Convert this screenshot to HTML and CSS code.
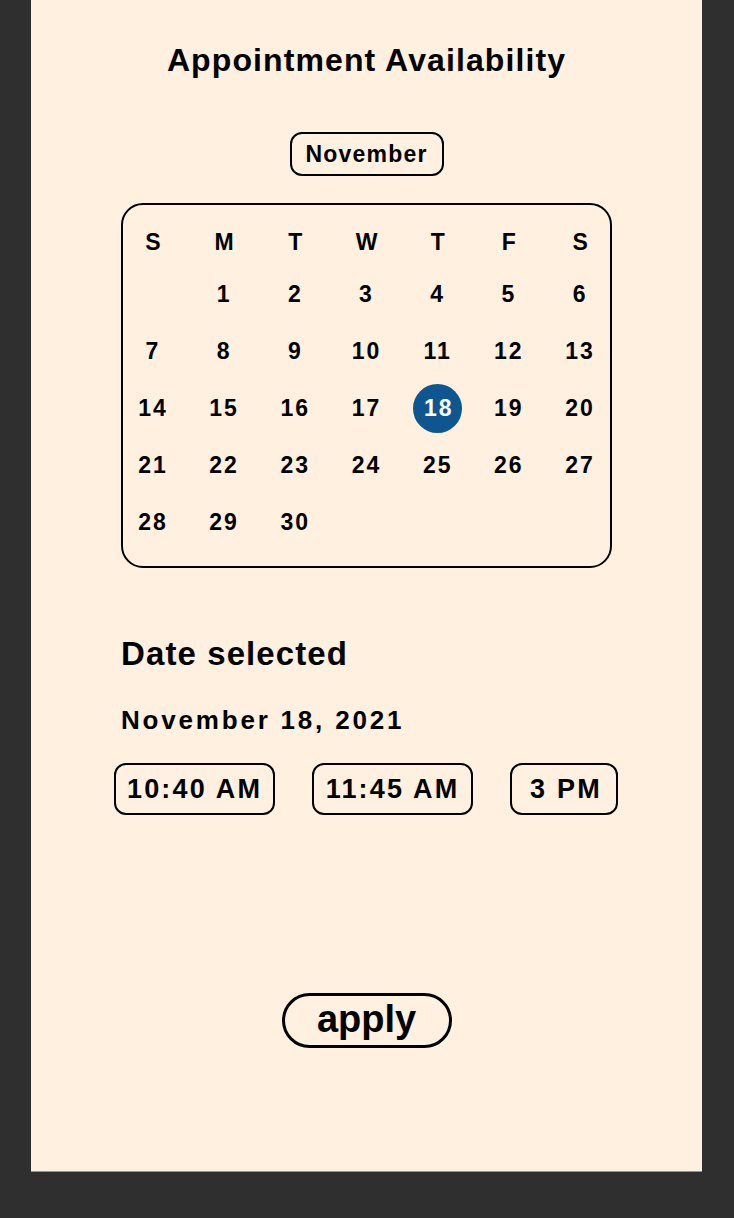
FILE: index.html
```html
<!DOCTYPE html>
<html lang="en">
<head>
<meta charset="utf-8">
<title>Appointment Availability</title>
<link rel="stylesheet" href="styles.css">
</head>
<body>
<main class="panel">
  <h1 class="title">Appointment Availability</h1>
  <div class="month">November</div>
  <section class="calendar">
    <div class="grid">
      <span class="dow">S</span><span class="dow">M</span><span class="dow">T</span><span class="dow">W</span><span class="dow">T</span><span class="dow">F</span><span class="dow">S</span>
      <span></span><span>1</span><span>2</span><span>3</span><span>4</span><span>5</span><span>6</span>
      <span>7</span><span>8</span><span>9</span><span>10</span><span>11</span><span>12</span><span>13</span>
      <span>14</span><span>15</span><span>16</span><span>17</span><span class="selected"><b>18</b></span><span>19</span><span>20</span>
      <span>21</span><span>22</span><span>23</span><span>24</span><span>25</span><span>26</span><span>27</span>
      <span>28</span><span>29</span><span>30</span><span></span><span></span><span></span><span></span>
    </div>
  </section>
  <section class="selection">
    <h2 class="sel-title">Date selected</h2>
    <p class="sel-date">November 18, 2021</p>
    <div class="times">
      <button class="time t1">10:40 AM</button>
      <button class="time t2">11:45 AM</button>
      <button class="time t3">3 PM</button>
    </div>
  </section>
  <button class="apply">apply</button>
</main>
</body>
</html>
```

FILE: styles.css
```css
* { box-sizing: border-box; }
html, body { margin: 0; padding: 0; }
body {
  background: #2f2f2f;
  width: 734px;
  height: 1218px;
  overflow: hidden;
  font-family: "Liberation Sans", Arial, sans-serif;
  color: #000;
}
.panel {
  margin-left: 31px;
  width: 671px;
  height: 1171px;
  background: #fff0df;
  box-shadow: 0 1px 0 #9a9088;
  display: flex;
  flex-direction: column;
  align-items: center;
}
.title {
  margin: 41px 0 0;
  font-size: 32px;
  line-height: 38px;
  font-weight: 700;
  letter-spacing: 1.1px;
}
.month {
  margin-top: 53px;
  height: 44px;
  width: 154px;
  border: 2px solid #000;
  border-radius: 12px;
  display: flex;
  align-items: center;
  justify-content: center;
  font-size: 23px;
  font-weight: 700;
  letter-spacing: 1.2px;
  padding-top: 1px;
}
.calendar {
  margin-top: 27px;
  width: 491px;
  height: 365px;
  border: 2px solid #000;
  border-radius: 22px;
  padding-top: 14px;
  display: flex;
  justify-content: center;
}
.grid {
  display: grid;
  grid-template-columns: repeat(7, 71.2px);
  grid-template-rows: 46px repeat(5, 57px);
  flex: none;
}
.grid span {
  display: flex;
  align-items: center;
  justify-content: center;
  font-size: 23px;
  font-weight: 700;
  letter-spacing: 2px;
  padding-top: 1px;
}
.grid .dow { letter-spacing: 0; }
.selected b {
  width: 49px;
  height: 49px;
  border-radius: 50%;
  background: #0e5690;
  color: #fff;
  display: flex;
  align-items: center;
  justify-content: center;
  font-weight: 700;
  padding-left: 2px;
}
.selection {
  width: 100%;
  padding-left: 90px;
}
.sel-title {
  margin: 66px 0 0;
  font-size: 33px;
  line-height: 40px;
  font-weight: 700;
  letter-spacing: 1.1px;
}
.sel-date {
  margin: 31px 0 0;
  font-size: 26px;
  line-height: 30px;
  font-weight: 700;
  letter-spacing: 2.8px;
}
.times {
  margin-top: 28px;
  margin-left: -7px;
  display: flex;
  gap: 37px;
}
.time {
  height: 52px;
  border: 2px solid #000;
  border-radius: 12px;
  background: transparent;
  font-family: inherit;
  font-size: 27px;
  font-weight: 700;
  letter-spacing: 2.2px;
  color: #000;
  padding: 0;
}
.t1 { width: 161px; }
.t2 { width: 161px; }
.t3 { width: 108px; padding-left: 4px; }
.apply {
  margin-top: 178px;
  width: 170px;
  height: 55px;
  border: 3px solid #000;
  border-radius: 28px;
  background: transparent;
  font-family: inherit;
  font-size: 38px;
  font-weight: 700;
  color: #000;
  padding: 0 0 2px;
}
```
